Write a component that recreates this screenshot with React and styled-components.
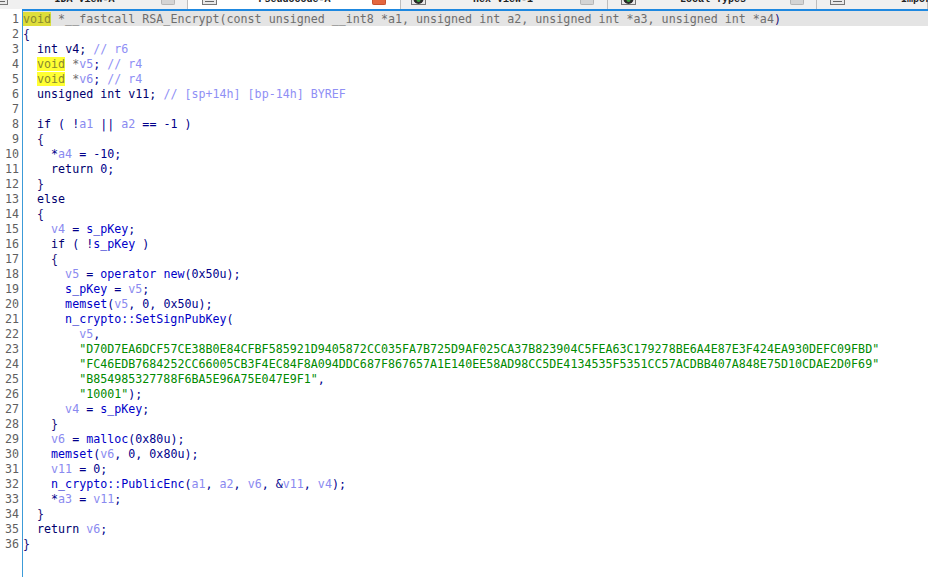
import React from 'react'
import styled, { createGlobalStyle } from 'styled-components'

const Global = createGlobalStyle`
  html, body {
    margin: 0;
    padding: 0;
    background: #fff;
    overflow: hidden;
  }
`

const Window = styled.div`
  width: 928px;
  height: 577px;
  display: flex;
  flex-direction: column;
  overflow: hidden;
  background: #fff;
`

const TabBar = styled.div`
  flex: none;
  height: 9px;
  display: flex;
  overflow: hidden;
  background: #f0f0f0;
`

const Tab = styled.div`
  flex: none;
  width: ${({ $width }) => $width}px;
  height: 9px;
  display: flex;
  align-items: flex-start;
  box-sizing: border-box;
  padding-left: ${({ $left }) => $left}px;
  padding-right: ${({ $right }) => $right}px;
  background: ${({ $active }) => ($active ? '#fff' : '#f0f0f0')};
  border-right: 1px solid #bdbdbd;
`

const TabIcon = styled.svg`
  flex: none;
  width: 15px;
  height: 5px;
  display: block;
  margin-left: ${({ $offset }) => $offset || 0}px;
`

const TabLabel = styled.span`
  flex: 1;
  min-width: 0;
  margin-top: -5px;
  padding-left: ${({ $indent }) => $indent || 0}px;
  text-align: ${({ $indent }) => ($indent ? 'left' : 'center')};
  font: 700 10px/10px 'Liberation Mono', monospace;
  color: #222;
  white-space: nowrap;
`

const TabClose = styled.span`
  flex: none;
  width: 14px;
  height: 5px;
  box-sizing: border-box;
  border: 1px solid ${({ $active }) => ($active ? '#c9512e' : '#b5b5b5')};
  border-top: 0;
  border-radius: 0 0 2px 2px;
  background: ${({ $active }) => ($active ? '#e4673f' : '#d4d4d4')};
`

const Body = styled.div`
  flex: 1;
  display: flex;
  min-height: 0;
`

const Gutter = styled.div`
  flex: none;
  width: 23px;
  box-sizing: border-box;
  padding-top: 2px;
  border-right: 1px solid #3c9bd8;
`

const LineNo = styled.div`
  height: 15px;
  padding-right: 3px;
  text-align: right;
  font: 11.67px/17px 'DejaVu Sans Mono', monospace;
  color: #5f5f5f;
`

const Code = styled.div`
  flex: 1;
  min-width: 0;
  border-top: 2px solid #1e88e0;
  margin-left: -1px;
  padding-left: 1px;
`

const Line = styled.div`
  height: 15px;
  white-space: pre;
  font: 11.67px/17px 'DejaVu Sans Mono', monospace;
  color: #00008b;
  background: ${({ $current }) => ($current ? '#e4e4e4' : 'transparent')};
`

const Kw = styled.span`
  color: #00006e;
`
const Var = styled.span`
  color: #8a8af0;
`
const Cmt = styled.span`
  color: #8f8ff5;
`
const Str = styled.span`
  color: #008a00;
`
const Fn = styled.span`
  color: #0000c8;
`
const Hl = styled.span`
  background: ${({ $current }) => ($current ? '#dede3a' : '#ffff33')};
  color: #888830;
`
const Brace = styled.span`
  color: #20107a;
`
const Dim = styled.span`
  color: #6e6e6e;
`

const PageIcon = ({ offset }) => (
  <TabIcon viewBox="0 0 15 5" $offset={offset}>
    <rect x="0.5" y="-3" width="14" height="7.5" fill="#e8e8e8" stroke="#777" />
    <rect x="3" y="1" width="9" height="1" fill="#666" />
  </TabIcon>
)

const RoundIcon = () => (
  <TabIcon viewBox="0 0 15 5">
    <rect x="0.5" y="-3" width="14" height="7.5" fill="#e8e8e8" stroke="#777" />
    <circle cx="7.5" cy="-1" r="5" fill="#2a2a2a" />
    <circle cx="7.5" cy="0" r="2" fill="#3aa040" />
  </TabIcon>
)

const tabs = [
  { width: 188, left: 0, right: 12, label: 'IDA View-A', icon: 'page', offset: -7 },
  { width: 213, left: 14, right: 14, label: 'Pseudocode-A', icon: 'page', active: true },
  { width: 207, left: 10, right: 13, label: 'Hex View-1', icon: 'round' },
  { width: 209, left: 13, right: 12, label: 'Local Types', icon: 'round' },
  { width: 111, left: 13, right: 0, label: 'Imports', icon: 'page', indent: 56, bare: true },
]

const lines = [
  <>
    <Hl $current>void</Hl>
    <Dim> *__fastcall RSA_Encrypt(const unsigned __int8 *a1, unsigned int a2, unsigned int *a3, unsigned int *a4</Dim>
    <Brace>)</Brace>
  </>,
  <Brace>{'{'}</Brace>,
  <>  <Kw>int</Kw> <Kw>v4;</Kw> <Cmt>// r6</Cmt></>,
  <>  <Hl>void</Hl> <Dim>*</Dim><Var>v5</Var>; <Cmt>// r4</Cmt></>,
  <>  <Hl>void</Hl> <Dim>*</Dim><Var>v6</Var>; <Cmt>// r4</Cmt></>,
  <>  <Kw>unsigned int v11;</Kw> <Cmt>// [sp+14h] [bp-14h] BYREF</Cmt></>,
  '',
  <>  <Kw>if</Kw> ( !<Var>a1</Var> || <Var>a2</Var> == -1 )</>,
  <>  <Brace>{'{'}</Brace></>,
  <>    *<Var>a4</Var> = -10;</>,
  <>    <Kw>return</Kw> 0;</>,
  <>  <Brace>{'}'}</Brace></>,
  <>  <Kw>else</Kw></>,
  <>  <Brace>{'{'}</Brace></>,
  <>    <Var>v4</Var> = <Fn>s_pKey</Fn>;</>,
  <>    <Kw>if</Kw> ( !<Fn>s_pKey</Fn> )</>,
  <>    <Brace>{'{'}</Brace></>,
  <>      <Var>v5</Var> = <Fn>operator new</Fn>(0x50u);</>,
  <>      <Fn>s_pKey</Fn> = <Var>v5</Var>;</>,
  <>      <Fn>memset</Fn>(<Var>v5</Var>, 0, 0x50u);</>,
  <>      <Fn>n_crypto::SetSignPubKey</Fn>(</>,
  <>        <Var>v5</Var>,</>,
  <>        <Str>"D70D7EA6DCF57CE38B0E84CFBF585921D9405872CC035FA7B725D9AF025CA37B823904C5FEA63C179278BE6A4E87E3F424EA930DEFC09FBD"</Str></>,
  <>        <Str>"FC46EDB7684252CC66005CB3F4EC84F8A094DDC687F867657A1E140EE58AD98CC5DE4134535F5351CC57ACDBB407A848E75D10CDAE2D0F69"</Str></>,
  <>        <Str>"B854985327788F6BA5E96A75E047E9F1"</Str>,</>,
  <>        <Str>"10001"</Str>);</>,
  <>      <Var>v4</Var> = <Fn>s_pKey</Fn>;</>,
  <>    <Brace>{'}'}</Brace></>,
  <>    <Var>v6</Var> = <Fn>malloc</Fn>(0x80u);</>,
  <>    <Fn>memset</Fn>(<Var>v6</Var>, 0, 0x80u);</>,
  <>    <Var>v11</Var> = 0;</>,
  <>    <Fn>n_crypto::PublicEnc</Fn>(<Var>a1</Var>, <Var>a2</Var>, <Var>v6</Var>, &<Var>v11</Var>, <Var>v4</Var>);</>,
  <>    *<Var>a3</Var> = <Var>v11</Var>;</>,
  <>  <Brace>{'}'}</Brace></>,
  <>  <Kw>return</Kw> <Var>v6</Var>;</>,
  <Brace>{'}'}</Brace>,
]

const App = () => (
  <Window>
    <Global />
    <TabBar>
      {tabs.map(tab => (
        <Tab
          key={tab.label}
          $width={tab.width}
          $left={tab.left}
          $right={tab.right}
          $active={tab.active}
        >
          {tab.icon === 'page' ? <PageIcon offset={tab.offset} /> : <RoundIcon />}
          <TabLabel $indent={tab.indent}>{tab.label}</TabLabel>
          {!tab.bare && <TabClose $active={tab.active} />}
        </Tab>
      ))}
    </TabBar>
    <Body>
      <Gutter>
        {lines.map((_, i) => (
          <LineNo key={i}>{i + 1}</LineNo>
        ))}
      </Gutter>
      <Code>
        {lines.map((line, i) => (
          <Line key={i} $current={i === 0}>
            {line}
          </Line>
        ))}
      </Code>
    </Body>
  </Window>
)

export default App
